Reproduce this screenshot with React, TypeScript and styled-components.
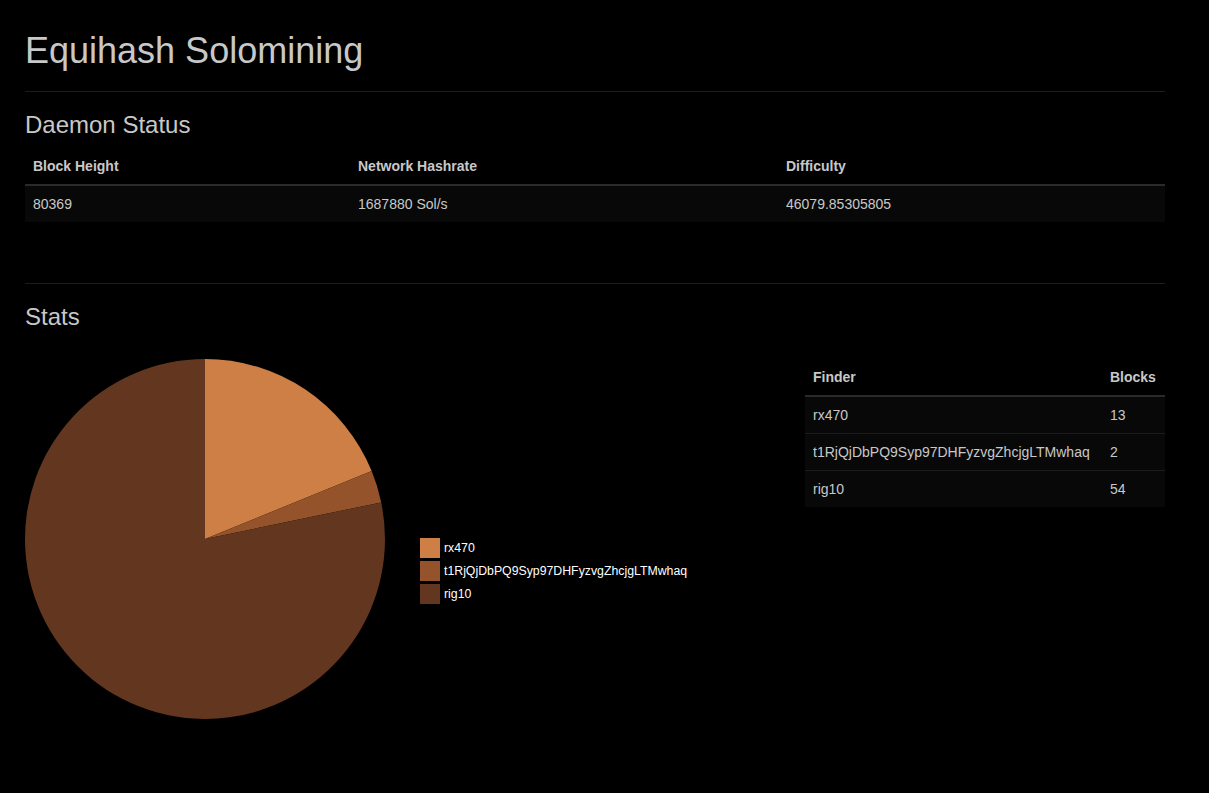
import React from 'react';
import styled, { createGlobalStyle } from 'styled-components';

const GlobalStyle = createGlobalStyle`
  html, body {
    margin: 0;
    padding: 0;
    background: #000;
  }
  body {
    font-family: "Liberation Sans", Arial, Helvetica, sans-serif;
    font-size: 14px;
    line-height: 1.42857;
    color: #c8c8c8;
  }
`;

type Slice = { name: string; blocks: number; color: string };

const finders: Slice[] = [
  { name: 'rx470', blocks: 13, color: '#cd7f45' },
  { name: 't1RjQjDbPQ9Syp97DHFyzvgZhcjgLTMwhaq', blocks: 2, color: '#95532b' },
  { name: 'rig10', blocks: 54, color: '#62361f' },
];

const Container = styled.div`
  width: 1140px;
  padding: 31px 25px 40px;
`;

const Title = styled.h1`
  margin: 0;
  font-size: 36px;
  line-height: 40px;
  font-weight: 500;
  color: #c8c8c8;
`;

const Rule = styled.hr<{ $top: number }>`
  margin: ${p => p.$top}px 0 0;
  border: 0;
  border-top: 1px solid #1c1c1c;
`;

const SectionTitle = styled.h3`
  margin: 20px 0 10px;
  font-size: 24px;
  line-height: 26px;
  font-weight: 500;
  color: #c8c8c8;
`;

const Table = styled.table`
  width: 100%;
  border-collapse: collapse;
  border-spacing: 0;
`;

const Th = styled.th<{ $w?: number }>`
  text-align: left;
  padding: 8px;
  line-height: 20px;
  font-weight: bold;
  border-bottom: 2px solid #2a2a2a;
  width: ${p => (p.$w ? `${p.$w}px` : 'auto')};
`;

const Td = styled.td`
  padding: 8px;
  line-height: 20px;
  border-top: 1px solid #1c1c1c;
`;

const BodyRow = styled.tr`
  background: #080808;
  &:first-child td {
    border-top: 0;
  }
`;

const StatsRow = styled.div`
  display: grid;
  grid-template-columns: 750px 360px;
  gap: 30px;
  margin-top: 29px;
  align-items: start;
`;

const ChartArea = styled.div`
  display: flex;
  align-items: center;
`;

const Legend = styled.ul`
  list-style: none;
  margin: 63px 0 0 35px;
  padding: 0;
  display: flex;
  flex-direction: column;
  gap: 3px;
`;

const LegendItem = styled.li`
  display: flex;
  align-items: center;
  gap: 4px;
  font-size: 12.3px;
  line-height: 20px;
  color: #fff;
`;

const Swatch = styled.span<{ $color: string }>`
  width: 20px;
  height: 20px;
  background: ${p => p.$color};
`;

const PieChart: React.FC<{ data: Slice[]; r: number }> = ({ data, r }) => {
  const total = data.reduce((s, d) => s + d.blocks, 0);
  let angle = -Math.PI / 2;
  const pt = (a: number) => `${r + r * Math.cos(a)} ${r + r * Math.sin(a)}`;
  return (
    <svg width={r * 2} height={r * 2} viewBox={`0 0 ${r * 2} ${r * 2}`}>
      {data.map(d => {
        const sweep = (d.blocks / total) * Math.PI * 2;
        const start = angle;
        angle += sweep;
        const large = sweep > Math.PI ? 1 : 0;
        return (
          <path
            key={d.name}
            d={`M ${r} ${r} L ${pt(start)} A ${r} ${r} 0 ${large} 1 ${pt(angle)} Z`}
            fill={d.color}
          />
        );
      })}
    </svg>
  );
};

export default function App() {
  return (
    <>
      <GlobalStyle />
      <Container>
        <Title>Equihash Solomining</Title>
        <Rule $top={20} />

        <SectionTitle>Daemon Status</SectionTitle>
        <Table>
          <thead>
            <tr>
              <Th $w={309}>Block Height</Th>
              <Th $w={412}>Network Hashrate</Th>
              <Th>Difficulty</Th>
            </tr>
          </thead>
          <tbody>
            <BodyRow>
              <Td>80369</Td>
              <Td>1687880 Sol/s</Td>
              <Td>46079.85305805</Td>
            </BodyRow>
          </tbody>
        </Table>
        <Rule $top={61} />

        <SectionTitle>Stats</SectionTitle>
        <StatsRow>
          <ChartArea>
            <PieChart data={finders} r={180} />
            <Legend>
              {finders.map(f => (
                <LegendItem key={f.name}>
                  <Swatch $color={f.color} />
                  {f.name}
                </LegendItem>
              ))}
            </Legend>
          </ChartArea>
          <Table>
            <thead>
              <tr>
                <Th>Finder</Th>
                <Th $w={47}>Blocks</Th>
              </tr>
            </thead>
            <tbody>
              {finders.map(f => (
                <BodyRow key={f.name}>
                  <Td>{f.name}</Td>
                  <Td>{f.blocks}</Td>
                </BodyRow>
              ))}
            </tbody>
          </Table>
        </StatsRow>
      </Container>
    </>
  );
}
